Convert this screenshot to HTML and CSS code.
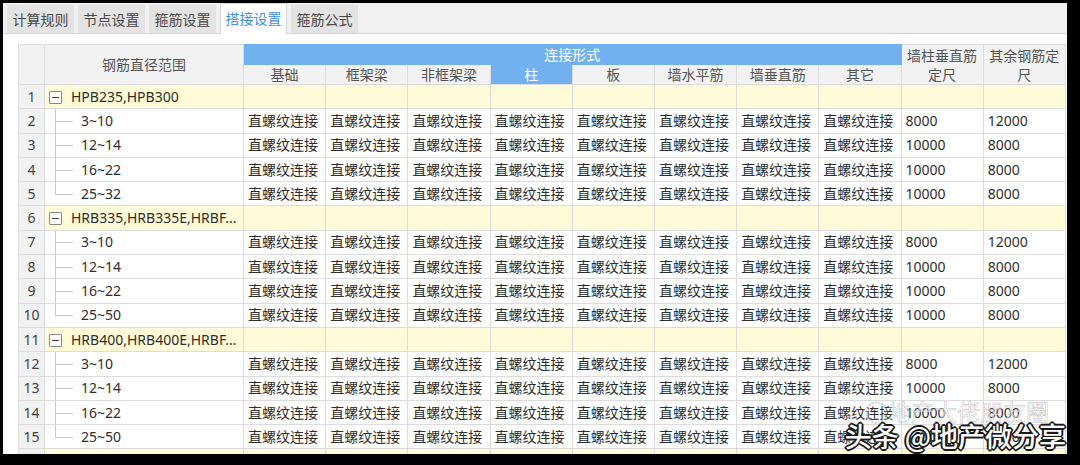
FILE: index.html
```html
<!DOCTYPE html>
<html>
<head>
<meta charset="utf-8">
<link rel="stylesheet" href="styles.css">
</head>
<body>
<div class="window">
  <div class="tabs">
    <div class="tab">计算规则</div>
    <div class="tab">节点设置</div>
    <div class="tab">箍筋设置</div>
    <div class="tab active">搭接设置</div>
    <div class="tab">箍筋公式</div>
  </div>
  <div class="panel">
    <table class="grid">
      <colgroup>
        <col class="c-rn"><col class="c-nm">
        <col><col><col><col><col><col><col><col><col><col>
      </colgroup>
      <thead>
        <tr class="h1">
          <th rowspan="2" class="rn"></th>
          <th rowspan="2">钢筋直径范围</th>
          <th colspan="8" class="band">连接形式</th>
          <th rowspan="2">墙柱垂直筋<br>定尺</th>
          <th rowspan="2">其余钢筋定<br>尺</th>
        </tr>
        <tr class="h2">
          <th>基础</th><th>框架梁</th><th>非框架梁</th><th class="sel">柱</th><th>板</th><th>墙水平筋</th><th>墙垂直筋</th><th>其它</th>
        </tr>
      </thead>
      <tbody>
        <tr class="grp"><td class="rn">1</td><td class="nm"><span class="box"></span>HPB235,HPB300</td><td></td><td></td><td></td><td></td><td></td><td></td><td></td><td></td><td></td><td></td></tr>
        <tr><td class="rn">2</td><td class="nm ch">3~10</td><td>直螺纹连接</td><td>直螺纹连接</td><td>直螺纹连接</td><td>直螺纹连接</td><td>直螺纹连接</td><td>直螺纹连接</td><td>直螺纹连接</td><td>直螺纹连接</td><td>8000</td><td>12000</td></tr>
        <tr><td class="rn">3</td><td class="nm ch">12~14</td><td>直螺纹连接</td><td>直螺纹连接</td><td>直螺纹连接</td><td>直螺纹连接</td><td>直螺纹连接</td><td>直螺纹连接</td><td>直螺纹连接</td><td>直螺纹连接</td><td>10000</td><td>8000</td></tr>
        <tr><td class="rn">4</td><td class="nm ch">16~22</td><td>直螺纹连接</td><td>直螺纹连接</td><td>直螺纹连接</td><td>直螺纹连接</td><td>直螺纹连接</td><td>直螺纹连接</td><td>直螺纹连接</td><td>直螺纹连接</td><td>10000</td><td>8000</td></tr>
        <tr><td class="rn">5</td><td class="nm ch last">25~32</td><td>直螺纹连接</td><td>直螺纹连接</td><td>直螺纹连接</td><td>直螺纹连接</td><td>直螺纹连接</td><td>直螺纹连接</td><td>直螺纹连接</td><td>直螺纹连接</td><td>10000</td><td>8000</td></tr>
        <tr class="grp"><td class="rn">6</td><td class="nm"><span class="box"></span>HRB335,HRB335E,HRBF...</td><td></td><td></td><td></td><td></td><td></td><td></td><td></td><td></td><td></td><td></td></tr>
        <tr><td class="rn">7</td><td class="nm ch">3~10</td><td>直螺纹连接</td><td>直螺纹连接</td><td>直螺纹连接</td><td>直螺纹连接</td><td>直螺纹连接</td><td>直螺纹连接</td><td>直螺纹连接</td><td>直螺纹连接</td><td>8000</td><td>12000</td></tr>
        <tr><td class="rn">8</td><td class="nm ch">12~14</td><td>直螺纹连接</td><td>直螺纹连接</td><td>直螺纹连接</td><td>直螺纹连接</td><td>直螺纹连接</td><td>直螺纹连接</td><td>直螺纹连接</td><td>直螺纹连接</td><td>10000</td><td>8000</td></tr>
        <tr><td class="rn">9</td><td class="nm ch">16~22</td><td>直螺纹连接</td><td>直螺纹连接</td><td>直螺纹连接</td><td>直螺纹连接</td><td>直螺纹连接</td><td>直螺纹连接</td><td>直螺纹连接</td><td>直螺纹连接</td><td>10000</td><td>8000</td></tr>
        <tr><td class="rn">10</td><td class="nm ch last">25~50</td><td>直螺纹连接</td><td>直螺纹连接</td><td>直螺纹连接</td><td>直螺纹连接</td><td>直螺纹连接</td><td>直螺纹连接</td><td>直螺纹连接</td><td>直螺纹连接</td><td>10000</td><td>8000</td></tr>
        <tr class="grp"><td class="rn">11</td><td class="nm"><span class="box"></span>HRB400,HRB400E,HRBF...</td><td></td><td></td><td></td><td></td><td></td><td></td><td></td><td></td><td></td><td></td></tr>
        <tr><td class="rn">12</td><td class="nm ch">3~10</td><td>直螺纹连接</td><td>直螺纹连接</td><td>直螺纹连接</td><td>直螺纹连接</td><td>直螺纹连接</td><td>直螺纹连接</td><td>直螺纹连接</td><td>直螺纹连接</td><td>8000</td><td>12000</td></tr>
        <tr><td class="rn">13</td><td class="nm ch">12~14</td><td>直螺纹连接</td><td>直螺纹连接</td><td>直螺纹连接</td><td>直螺纹连接</td><td>直螺纹连接</td><td>直螺纹连接</td><td>直螺纹连接</td><td>直螺纹连接</td><td>10000</td><td>8000</td></tr>
        <tr><td class="rn">14</td><td class="nm ch">16~22</td><td>直螺纹连接</td><td>直螺纹连接</td><td>直螺纹连接</td><td>直螺纹连接</td><td>直螺纹连接</td><td>直螺纹连接</td><td>直螺纹连接</td><td>直螺纹连接</td><td>10000</td><td>8000</td></tr>
        <tr><td class="rn">15</td><td class="nm ch last">25~50</td><td>直螺纹连接</td><td>直螺纹连接</td><td>直螺纹连接</td><td>直螺纹连接</td><td>直螺纹连接</td><td>直螺纹连接</td><td>直螺纹连接</td><td>直螺纹连接</td><td>10000</td><td>8000</td></tr>
        <tr class="grp"><td class="rn"></td><td class="nm"><span class="box"></span></td><td></td><td></td><td></td><td></td><td></td><td></td><td></td><td></td><td></td><td></td></tr>
      </tbody>
    </table>
  </div>
  <div class="wm-faint">◌地产大佬朋友圈</div>
  <div class="wm">头条 @地产微分享</div>
</div>
</body>
</html>
```

FILE: styles.css
```css
html, body {
  margin: 0;
  padding: 0;
  background: #000;
}
body {
  width: 1080px;
  height: 465px;
  overflow: hidden;
  font-family: "Noto Sans", "Noto Sans CJK SC", sans-serif;
}
.window {
  position: relative;
  margin: 3px 0 0 3px;
  width: 1064px;
  height: 451px;
  background: #f1f1f1;
  overflow: hidden;
}
.tabs {
  display: flex;
  gap: 4px;
  height: 31px;
  padding-left: 4px;
  box-sizing: border-box;
  border-bottom: 1px solid #d4d4d4;
  align-items: flex-end;
}
.tab {
  width: 67px;
  height: 28px;
  box-sizing: border-box;
  background: #e3e3e3;
  color: #4a4a4a;
  font-size: 14px;
  line-height: 28px;
  text-align: center;
  font-family: "Noto Sans CJK SC", sans-serif;
}
.tab.active {
  background: #fff;
  color: #3f8ee0;
  height: 31px;
  line-height: 29px;
  margin-bottom: -1px;
  border: 1px solid #d4d4d4;
  border-bottom: none;
}
.panel {
  background: #fff;
  height: 420px;
  padding: 10px 0 0 15px;
  box-sizing: border-box;
}
.grid {
  border-collapse: collapse;
  table-layout: fixed;
  width: 1048px;
  font-size: 14px;
  color: #2e2e2e;
}
.c-rn { width: 26px; }
.c-nm { width: 199px; }
.grid th, .grid td {
  border: 1px solid #dcdcdc;
  padding: 0;
  white-space: nowrap;
  overflow: hidden;
}
.grid th {
  background: #f2f2f2;
  font-weight: normal;
  color: #555;
  line-height: 19px;
  font-family: "Noto Sans CJK SC", sans-serif;
}
.h1 { height: 19px; }
.h2 { height: 20px; }
.grid th.band {
  background: #72b0f0;
  color: #fff;
  border-color: #72b0f0;
}
.grid th.sel {
  background: #72b0f0;
  color: #fff;
}
.grid tbody tr { height: 24.3px; }
.grid td {
  padding-left: 4px;
  line-height: 22px;
  font-family: "Noto Sans", "Noto Sans CJK SC", sans-serif;
}
.grid td.rn {
  background: #f2f2f2;
  text-align: center;
  padding-left: 0;
  color: #444;
}
.grp td { background: #fffbd8; }
.grp td.rn { background: #f2f2f2; }
.grid td.nm {
  position: relative;
  padding-left: 26px;
  color: #2e2e2e;
}
.grid td.nm.ch { padding-left: 36px; }
.box {
  position: absolute;
  left: 4px;
  top: 50%;
  width: 11px;
  height: 11px;
  margin-top: -6px;
  border: 1px solid #8a8a8a;
  background: #fff;
  border-radius: 1px;
}
.box::after {
  content: "";
  position: absolute;
  left: 2px;
  right: 2px;
  top: 5px;
  border-top: 1px solid #444;
}
.ch::before {
  content: "";
  position: absolute;
  left: 10px;
  top: 0;
  bottom: 0;
  border-left: 1px solid #c8c8c8;
}
.ch.last::before { bottom: 50%; }
.ch::after {
  content: "";
  position: absolute;
  left: 10px;
  top: 50%;
  width: 18px;
  border-top: 1px solid #c8c8c8;
}
.wm {
  position: absolute;
  right: 1px;
  bottom: 1px;
  font-family: "Noto Sans CJK SC", sans-serif;
  font-size: 27px;
  font-weight: 500;
  line-height: 34px;
  color: #fff;
  text-shadow:
    1px 0 0 #1a1a1a, -1px 0 0 #1a1a1a, 0 1px 0 #1a1a1a, 0 -1px 0 #1a1a1a,
    1px 1px 0 #1a1a1a, -1px -1px 0 #1a1a1a, 1px -1px 0 #1a1a1a, -1px 1px 0 #1a1a1a,
    2px 0 0 #1a1a1a, -2px 0 0 #1a1a1a, 0 2px 0 #1a1a1a, 0 -2px 0 #1a1a1a;
}
.wm-faint {
  position: absolute;
  right: 18px;
  bottom: 29px;
  font-family: "Noto Sans CJK SC", sans-serif;
  font-size: 23px;
  line-height: 28px;
  color: rgba(255,255,255,0.6);
  -webkit-text-stroke: 0.5px rgba(120,120,120,0.55);
}
```
